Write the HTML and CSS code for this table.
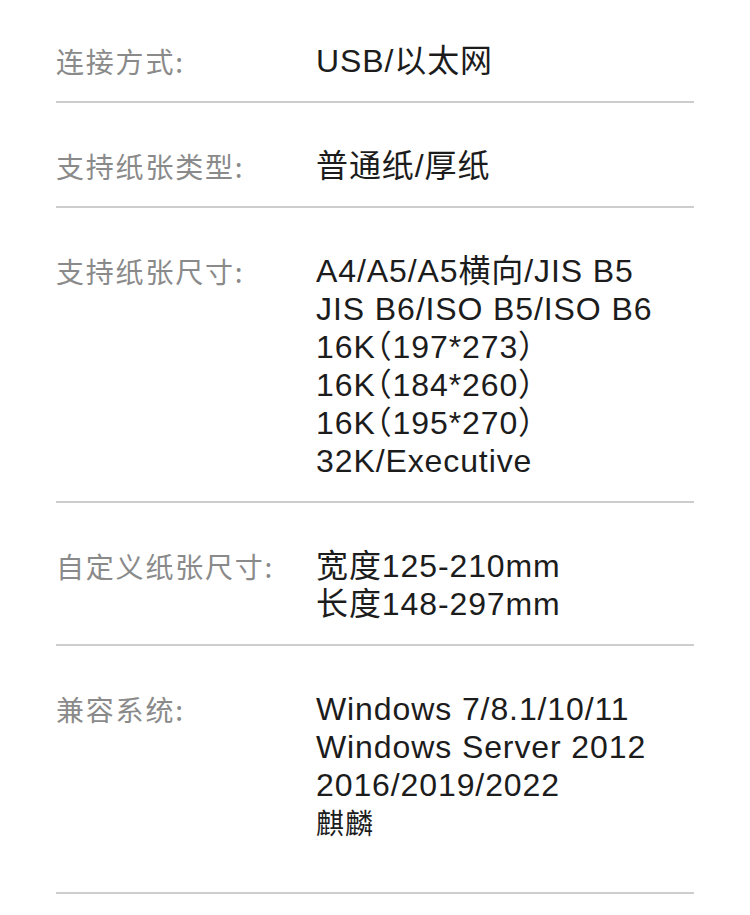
FILE: index.html
```html
<!DOCTYPE html>
<html lang="zh-CN">
  <head>
    <meta charset="UTF-8" />
    <meta name="viewport" content="width=device-width, initial-scale=1.0" />
    <title>规格参数</title>
    <link rel="stylesheet" href="styles.css">
  </head>
  <body>
    <div class="specs">
      <div class="spec-row">
        <div class="spec-label">连接方式:</div>
        <div class="spec-value">USB/以太网</div>
      </div>
      <div class="spec-row">
        <div class="spec-label">支持纸张类型:</div>
        <div class="spec-value">普通纸/厚纸</div>
      </div>
      <div class="spec-row">
        <div class="spec-label">支持纸张尺寸:</div>
        <div class="spec-value">
          A4/A5/A5横向/JIS B5<br />
          JIS B6/ISO B5/ISO B6<br />
          16K（197*273）<br />
          16K（184*260）<br />
          16K（195*270）<br />
          32K/Executive
        </div>
      </div>
      <div class="spec-row">
        <div class="spec-label">自定义纸张尺寸:</div>
        <div class="spec-value">
          宽度125-210mm<br />
          长度148-297mm
        </div>
      </div>
      <div class="spec-row spec-row--last">
        <div class="spec-label">兼容系统:</div>
        <div class="spec-value">
          Windows 7/8.1/10/11<br />
          Windows Server 2012<br />
          2016/2019/2022<br />
          <span class="small">麒麟</span>
        </div>
      </div>
    </div>
  </body>
</html>
```

FILE: styles.css
```css
* {
  margin: 0;
  box-sizing: border-box;
}

body {
  background: #fff;
  font-family: "Liberation Sans", "Noto Sans CJK SC", sans-serif;
}

.specs {
  padding: 0 56px;
}

.spec-row {
  display: flex;
  padding: 44px 0 21px;
  border-bottom: 2px solid #cdcdcd;
}

.spec-row:first-child {
  padding-top: 42px;
}

.spec-row--last {
  padding-bottom: 48px;
}

.spec-label {
  flex: 0 0 260px;
  font-family: "Noto Sans CJK SC", sans-serif;
  font-size: 28px;
  line-height: 38px;
  letter-spacing: 1.8px;
  color: #8a8a8a;
}

.spec-value {
  font-size: 32px;
  line-height: 38px;
  letter-spacing: 0.9px;
  color: #1c1c1c;
  font-feature-settings: "halt";
}

.spec-value .small {
  font-size: 28px;
  letter-spacing: 1px;
}
```
